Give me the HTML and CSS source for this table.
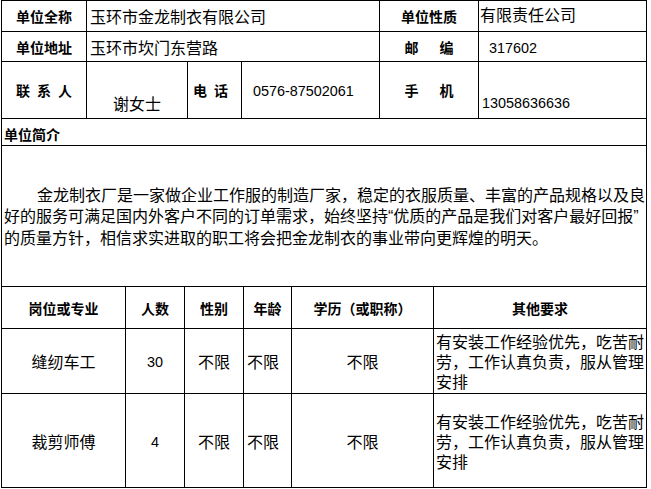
FILE: index.html
```html
<!DOCTYPE html>
<html lang="zh-CN">
<head>
<meta charset="utf-8">
<title>单位招聘信息</title>
<link rel="stylesheet" href="styles.css">
</head>
<body>
<div class="sheet">
  <table class="grid top">
    <colgroup>
      <col class="c85"><col class="c101"><col class="c54"><col class="c138"><col class="c99"><col class="c168">
    </colgroup>
    <tr class="r31">
      <td class="label">单位全称</td>
      <td colspan="3" class="val pad3">玉环市金龙制衣有限公司</td>
      <td class="label">单位性质</td>
      <td class="val pad1 hi">有限责任公司</td>
    </tr>
    <tr class="r30">
      <td class="label">单位地址</td>
      <td colspan="3" class="val pad3">玉环市坎门东营路</td>
      <td class="label">邮&emsp;&ensp;编</td>
      <td class="val pad10"><span class="num">317602</span></td>
    </tr>
    <tr class="r57">
      <td class="label">联&ensp;系&ensp;人</td>
      <td class="val center low">谢女士</td>
      <td class="label left pad5">电&ensp;话</td>
      <td class="val pad11"><span class="num">0576-87502061</span></td>
      <td class="label">手&emsp;&ensp;机</td>
      <td class="val pad3 low"><span class="num">13058636636</span></td>
    </tr>
  </table>
  <table class="grid follow">
    <tr class="r27">
      <td class="label left pad2 lowish">单位简介</td>
    </tr>
    <tr class="r141">
      <td class="intro">
        <p class="intro-text">金龙制衣厂是一家做企业工作服的制造厂家，稳定的衣服质量、丰富的产品规格以及良好的服务可满足国内外客户不同的订单需求，始终坚持<span class="q">“</span>优质的产品是我们对客户最好回报<span class="q">”</span>的质量方针，相信求实进取的职工将会把金龙制衣的事业带向更辉煌的明天。</p>
      </td>
    </tr>
  </table>
  <table class="grid follow jobs">
    <colgroup>
      <col class="c124"><col class="c59"><col class="c59b"><col class="c48"><col class="c142"><col class="c213">
    </colgroup>
    <tr class="r42">
      <td class="label">岗位或专业</td>
      <td class="label">人数</td>
      <td class="label">性别</td>
      <td class="label">年龄</td>
      <td class="label">学历（或职称）</td>
      <td class="label">其他要求</td>
    </tr>
    <tr class="r65">
      <td class="val center">缝纫车工</td>
      <td class="val center"><span class="num">30</span></td>
      <td class="val center">不限</td>
      <td class="val pad3">不限</td>
      <td class="val center">不限</td>
      <td class="val pad2 req">有安装工作经验优先，吃苦耐劳，工作认真负责，服从管理安排</td>
    </tr>
    <tr class="r94">
      <td class="val center">裁剪师傅</td>
      <td class="val center"><span class="num">4</span></td>
      <td class="val center">不限</td>
      <td class="val pad3">不限</td>
      <td class="val center">不限</td>
      <td class="val pad2 req">有安装工作经验优先，吃苦耐劳，工作认真负责，服从管理安排</td>
    </tr>
  </table>
</div>
</body>
</html>
```
FILE: styles.css
```css
html, body {
  margin: 0;
  padding: 0;
  background: #ffffff;
}

body {
  font-family: "Noto Sans CJK SC", "Liberation Sans", sans-serif;
  color: #000000;
}

.sheet {
  padding-left: 1px;
  width: 646px;
}

.grid {
  border-collapse: collapse;
  table-layout: fixed;
  width: 646px;
}

.grid td {
  box-sizing: border-box;
  border: 1px solid #000000;
  padding: 0;
  vertical-align: middle;
  overflow: hidden;
}

.follow {
  margin-top: -1px;
}

.c85 { width: 85px; }
.c101 { width: 101px; }
.c54 { width: 54px; }
.c138 { width: 138px; }
.c99 { width: 99px; }
.c168 { width: 168px; }

.c124 { width: 124px; }
.c59 { width: 59px; }
.c59b { width: 59px; }
.c48 { width: 48px; }
.c142 { width: 142px; }
.c213 { width: 213px; }

.r31 td { height: 31px; }
.r30 td { height: 30px; }
.r57 td { height: 57px; }
.r27 td { height: 27px; }
.r141 td { height: 141px; }
.r42 td { height: 42px; }
.r65 td { height: 65px; }
.r94 td { height: 94px; }

.label {
  font-size: 14px;
  font-weight: bold;
  text-align: center;
  line-height: 18px;
  white-space: nowrap;
}

.val {
  font-size: 16px;
  line-height: 20px;
  text-align: left;
}

.left { text-align: left; }
.center { text-align: center; }

.pad1 { padding-left: 1px !important; }
.pad2 { padding-left: 2px !important; }
.pad3 { padding-left: 3px !important; }
.pad5 { padding-left: 5px !important; }
.pad10 { padding-left: 10px !important; }
.pad11 { padding-left: 11px !important; }

.low {
  vertical-align: bottom !important;
  padding-bottom: 5px !important;
}

.lowish {
  padding-top: 3px !important;
}

.hi {
  padding-bottom: 4px !important;
}

.num {
  font-family: "Liberation Sans", sans-serif;
  font-size: 14.4px;
}

.q {
  font-family: "Liberation Sans", sans-serif;
}

.intro {
  padding: 0 0 0 2px !important;
}

.intro-text {
  margin: 0;
  font-size: 16px;
  line-height: 21px;
  text-indent: 33px;
}

.req {
  line-height: 20px;
}
```
